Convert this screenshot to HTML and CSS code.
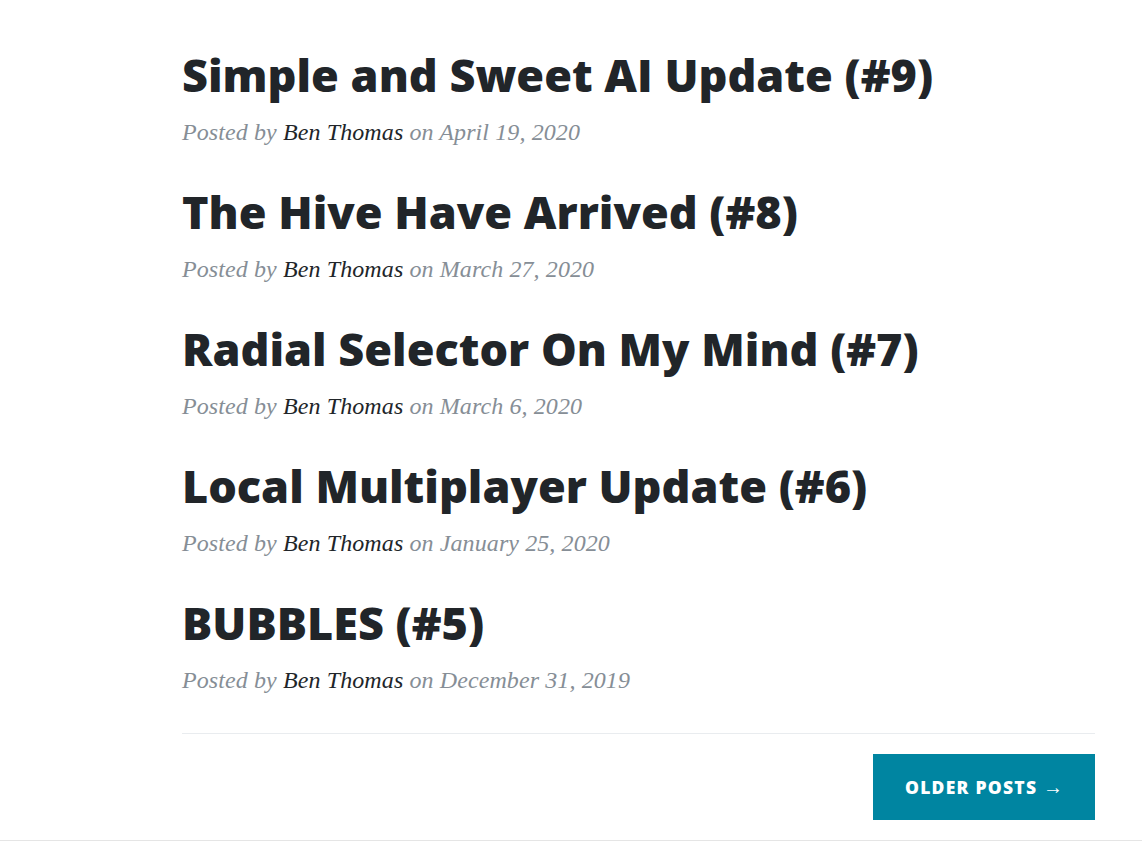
FILE: index.html
```html
<!DOCTYPE html>
<html>
<head>
<meta charset="utf-8">
<link rel="stylesheet" href="styles.css">
</head>
<body>
<main class="content">
  <div class="post">
    <h2 class="post-title">Simple and Sweet AI Update (#9)</h2>
    <p class="post-meta">Posted by <a href="#">Ben Thomas</a> on April 19, 2020</p>
  </div>
  <div class="post">
    <h2 class="post-title">The Hive Have Arrived (#8)</h2>
    <p class="post-meta">Posted by <a href="#">Ben Thomas</a> on March 27, 2020</p>
  </div>
  <div class="post">
    <h2 class="post-title">Radial Selector On My Mind (#7)</h2>
    <p class="post-meta">Posted by <a href="#">Ben Thomas</a> on March 6, 2020</p>
  </div>
  <div class="post">
    <h2 class="post-title">Local Multiplayer Update (#6)</h2>
    <p class="post-meta">Posted by <a href="#">Ben Thomas</a> on January 25, 2020</p>
  </div>
  <div class="post">
    <h2 class="post-title">BUBBLES (#5)</h2>
    <p class="post-meta">Posted by <a href="#">Ben Thomas</a> on December 31, 2019</p>
  </div>
  <hr class="divider">
  <div class="pager">
    <a class="btn" href="#">Older Posts <span class="arrow">&rarr;</span></a>
  </div>
</main>
<footer class="footer"></footer>
</body>
</html>
```
FILE: styles.css
```css
html, body {
  margin: 0;
  padding: 0;
  background: #fff;
}
body {
  font-family: "Open Sans", "Liberation Sans", sans-serif;
  color: #212529;
}
.content {
  width: 913px;
  margin-left: 182px;
  padding-top: 48px;
}
.post {
  margin-bottom: 38px;
}
.post-title {
  font-family: "Open Sans", sans-serif;
  font-weight: 800;
  font-size: 45px;
  line-height: 54px;
  margin: 0 0 15px 0;
  color: #212529;
}
.post-meta {
  font-family: "Liberation Serif", serif;
  font-style: italic;
  font-size: 24px;
  letter-spacing: 0.1px;
  line-height: 30px;
  margin: 0;
  color: #868e96;
}
.post-meta a {
  color: #212529;
  text-decoration: none;
}
.divider {
  border: 0;
  border-top: 1px solid #e9ecef;
  margin: 11px 0 0 0;
}
.pager {
  display: flex;
  justify-content: flex-end;
  padding: 20px 0 20px;
}
.btn {
  display: inline-flex;
  align-items: center;
  justify-content: center;
  width: 222px;
  height: 66px;
  background: #0085a1;
  color: #fff;
  text-decoration: none;
  text-transform: uppercase;
  font-family: "Open Sans", sans-serif;
  font-weight: 800;
  font-size: 17.5px;
  letter-spacing: 1.25px;
  white-space: pre;
}
.arrow {
  font-family: "Liberation Serif", serif;
  font-weight: 400;
  font-size: 20px;
  letter-spacing: 0;
}
.footer {
  border-top: 1px solid #e5e5e5;
  height: 20px;
}
```
